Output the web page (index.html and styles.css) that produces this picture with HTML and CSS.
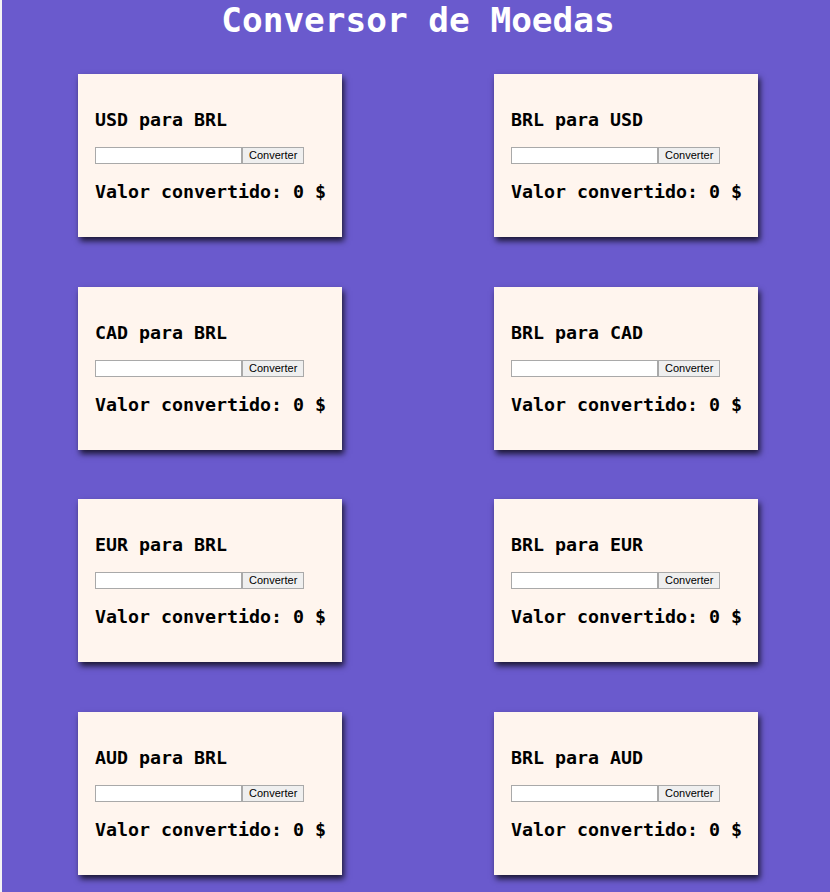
FILE: index.html
```html
<!DOCTYPE html>
<html lang="pt">
<head>
<meta charset="utf-8">
<title>Conversor de Moedas</title>
<link rel="stylesheet" href="styles.css">
</head>
<body>
<h1 class="title">Conversor de Moedas</h1>
<main class="grid">
  <section class="card"><h3 class="card-title">USD para BRL</h3><div class="row"><input class="field" type="text"><button class="btn">Converter</button></div><p class="result">Valor convertido: 0 $</p></section>
  <section class="card"><h3 class="card-title">BRL para USD</h3><div class="row"><input class="field" type="text"><button class="btn">Converter</button></div><p class="result">Valor convertido: 0 $</p></section>
  <section class="card"><h3 class="card-title">CAD para BRL</h3><div class="row"><input class="field" type="text"><button class="btn">Converter</button></div><p class="result">Valor convertido: 0 $</p></section>
  <section class="card"><h3 class="card-title">BRL para CAD</h3><div class="row"><input class="field" type="text"><button class="btn">Converter</button></div><p class="result">Valor convertido: 0 $</p></section>
  <section class="card"><h3 class="card-title">EUR para BRL</h3><div class="row"><input class="field" type="text"><button class="btn">Converter</button></div><p class="result">Valor convertido: 0 $</p></section>
  <section class="card"><h3 class="card-title">BRL para EUR</h3><div class="row"><input class="field" type="text"><button class="btn">Converter</button></div><p class="result">Valor convertido: 0 $</p></section>
  <section class="card"><h3 class="card-title">AUD para BRL</h3><div class="row"><input class="field" type="text"><button class="btn">Converter</button></div><p class="result">Valor convertido: 0 $</p></section>
  <section class="card"><h3 class="card-title">BRL para AUD</h3><div class="row"><input class="field" type="text"><button class="btn">Converter</button></div><p class="result">Valor convertido: 0 $</p></section>
</main>
</body>
</html>
```
FILE: styles.css
```css
html, body {
  margin: 0;
  padding: 0;
}
body {
  background: #6a5acd;
  border-left: 2px solid #f4f4f4;
  min-height: 892px;
  box-sizing: border-box;
  font-family: "DejaVu Sans Mono", "Liberation Mono", monospace;
}
.title {
  margin: 0 0 34px 0;
  padding-left: 4px;
  font-size: 34.4px;
  line-height: 40px;
  font-weight: bold;
  color: #ffffff;
  text-align: center;
}
.grid {
  display: grid;
  grid-template-columns: 264px 264px;
  column-gap: 152px;
  row-gap: 49.6px;
  padding-left: 76px;
}
.card {
  box-sizing: border-box;
  height: 163px;
  background: #fff5ee;
  padding: 35px 0 0 17px;
  box-shadow: 2px 4px 6px rgba(0, 0, 0, 0.75);
  display: flex;
  flex-direction: column;
}
.card-title {
  margin: 0;
  font-size: 18.3px;
  line-height: 22px;
  font-weight: bold;
  color: #000;
}
.row {
  display: flex;
  margin-top: 16px;
  height: 17px;
}
.field {
  box-sizing: border-box;
  width: 147px;
  height: 17px;
  margin: 0;
  padding: 0 2px;
  border: 1px solid #a9a9a9;
  background: #fff;
  font: 11px "Liberation Sans", sans-serif;
}
.btn {
  box-sizing: border-box;
  height: 17px;
  margin: 0;
  padding: 0 6px;
  border: 1px solid #a9a9a9;
  background: #efefef;
  color: #000;
  font: 11px/15px "Liberation Sans", Arial, sans-serif;
}
.result {
  margin: 17px 0 0 0;
  font-size: 18.3px;
  line-height: 22px;
  font-weight: bold;
  color: #000;
}
```
